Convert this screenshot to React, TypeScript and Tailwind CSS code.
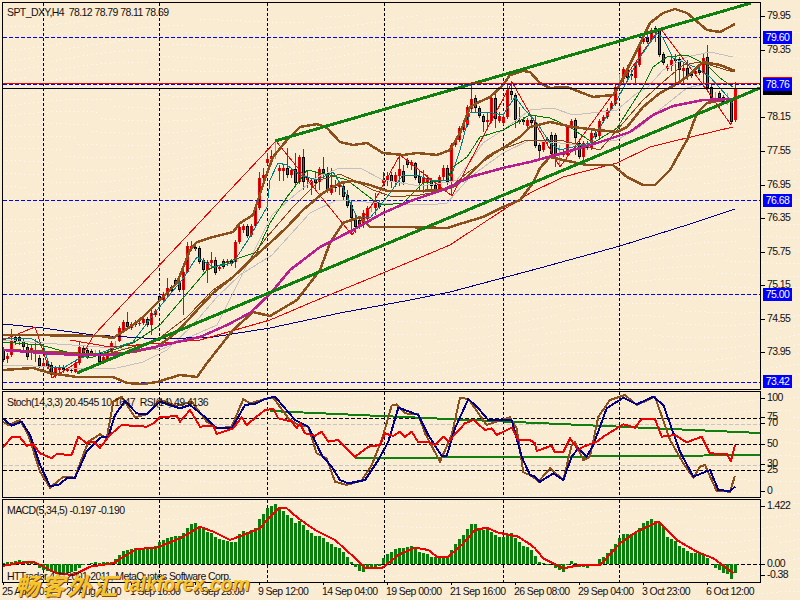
import React from "react";

type Candle = [string, number, number, number, number];

// zoomed reference coordinates -> page coordinates
const z = (ox: number, oy: number, pts: number[]) => pts.map((v, i) => (i % 2 ? oy + v / 3 : ox + v / 3));
const pl = (pts: number[]) => pts.map((v, i) => (i % 2 ? v + " " : v + ",")).join("");

const CANDLES: Candle[] = [
  ["g",350,360,347,362],["r",356,359,353,363],["r",340,355,329,357],["g",337,342,335,345],["g",337,342,335,345],["g",341,347,338,350],["g",347,357,344,360],["r",348,353,345,360],["g",350,354,339,362],["g",358,366,355,368],
  ["r",363,367,360,369],["g",363,366,361,369],["g",365,375,362,378],["r",368,376,366,378],["r",368,370,365,375],["g",368,370,365,373],["r",369,371,368,372],["g",370,371,368,373],["r",363,372,361,373],["r",347,363,342,365],
  ["g",348,353,345,356],["g",350,357,348,359],["g",351,353,349,355],["l",352,353,350,356],["g",353,362,350,364],["r",357,362,354,364],["r",352,359,350,361],["r",343,352,341,353],["l",343,344,341,346],["r",328,341,326,342],
  ["r",322,330,320,332],["g",322,327,312,329],["r",324,328,322,330],["g",322,325,320,327],["r",323,324,320,326],["r",319,323,317,325],["g",319,325,317,327],["r",313,325,310,335],["r",311,315,309,317],["g",296,300,294,302],
  ["r",294,300,292,302],["r",288,295,278,297],["g",287,291,285,293],["g",280,284,278,286],["g",282,290,280,292],["r",272,290,270,315],["r",246,272,242,273],["r",246,249,241,251],["g",247,249,245,251],["g",248,262,246,264],
  ["g",260,270,258,272],["r",262,270,260,283],["r",260,263,252,268],["g",260,273,257,275],["r",267,269,265,271],["g",261,267,259,269],["r",261,263,259,266],["g",261,264,259,266],["r",242,262,240,268],["r",227,242,223,244],
  ["r",226,230,224,233],["g",226,236,224,238],["r",226,235,224,237],["r",207,226,207,228],["r",178,208,172,210],["r",175,178,168,180],["r",159,163,153,165],["r",156,159,150,163],["l",157,158,142,159],["r",168,171,165,181],
  ["r",168,171,165,181],["g",168,175,148,178],["r",170,175,168,178],["g",169,183,153,185],["r",157,182,155,184],["g",157,182,149,190],["g",177,180,170,188],["r",180,185,178,195],["g",179,183,172,190],["r",169,182,167,190],
  ["g",169,173,157,178],["g",173,190,167,193],["r",185,193,168,195],["g",187,188,180,192],["r",185,187,183,195],["g",186,197,183,200],["g",195,206,190,208],["g",205,218,200,235],["g",218,227,215,233],["g",220,226,217,229],
  ["r",213,225,210,228],["r",208,219,206,224],["l",208,209,205,212],["r",203,208,193,215],["g",203,207,200,209],["r",180,183,172,186],["r",176,181,172,186],["g",175,182,172,188],["r",175,182,172,187],["r",169,176,155,186],
  ["g",171,182,165,185],["g",160,165,158,168],["r",162,165,160,170],["g",163,178,162,180],["g",176,183,170,190],["r",177,183,170,193],["r",178,183,175,190],["g",181,186,178,190],["g",185,190,182,192],["r",177,189,175,192],
  ["r",168,177,165,181],["g",168,182,165,185],["r",145,182,143,195],["r",140,145,138,147],["r",128,140,126,142],["r",124,130,122,132],["r",107,125,105,127],["r",99,109,84,112],["g",98,108,95,112],["g",108,116,106,118],
  ["g",116,122,114,132],["r",120,122,112,130],["r",98,121,96,123],["g",98,119,93,128],["r",116,121,112,123],["r",117,123,115,125],["r",90,117,84,119],["g",91,95,81,100],["g",95,120,93,128],["g",120,122,107,124],
  ["g",120,122,117,125],["r",120,126,118,128],["g",120,123,118,127],["g",122,146,115,148],["g",145,151,143,160],["r",142,150,140,152],["g",139,142,137,144],["g",135,154,132,156],["g",135,155,133,167],["l",145,146,145,167],
  ["r",152,155,150,157],["r",127,155,125,157],["r",121,126,119,128],["g",120,138,118,155],["g",143,157,141,159],["r",143,157,141,162],["g",143,148,141,150],["r",133,148,131,150],["g",133,137,131,139],["r",121,136,119,138],
  ["r",117,121,115,123],["r",110,117,108,119],["r",103,109,101,111],["r",87,104,85,106],["l",77,78,74,82],["r",69,78,67,85],["g",68,78,65,82],["g",74,76,70,80],["r",65,78,63,84],["r",45,65,43,67],
  ["r",38,42,36,44],["g",38,42,34,44],["r",30,40,28,42],["g",28,32,26,42],["g",30,55,28,57],["g",54,63,52,65],["r",66,69,64,71],["r",60,66,55,71],["g",59,61,54,84],["g",59,70,57,80],
  ["r",68,71,62,85],["g",68,76,60,80],["g",74,76,72,78],["r",71,74,69,76],["g",70,73,67,75],["r",58,73,53,87],["g",57,88,45,90],["g",87,98,85,100],["l",94,95,92,98],["g",93,98,91,100],
  ["g",97,102,95,104],["l",98,99,93,105],["g",100,122,98,124],["R",88,120,82,122],
];

const MACD_TOPS = [
  535,532,530,527,525,527,530,532,535,550,555,558,562,565,565,565,565,562,558,548,540,538,535,532,535,532,530,530,522,510,
  498,495,493,490,490,488,488,485,484,472,465,460,456,454,452,445,430,418,415,425,430,440,445,455,462,465,468,470,470,448,
  438,440,435,428,402,388,370,362,358,368,378,390,400,413,408,420,435,445,453,453,460,472,478,485,490,502,515,530,545,558,
  562,550,548,548,542,520,507,500,493,490,490,485,482,490,500,505,508,515,515,513,515,513,495,478,462,450,432,418,418,430,
  435,430,440,450,455,455,450,445,460,472,482,487,495,513,530,535,540,538,550,555,560,540,528,535,545,545,550,542,540,522,
  515,505,492,478,460,447,447,447,440,428,415,408,402,407,412,425,457,462,468,482,490,497,503,505,505,508,518,538,550,555,
  565,568,582,565,
];

const BB_UP = [3,335,33,335,100,336,113,338,133,325,143,317,160,300,177,283,190,250,197,242,213,237,233,232,240,223,253,215,267,173,273,157,287,140,300,127,317,124,327,128,340,142,353,145,367,143,383,153,403,155,417,153,437,155,450,150,460,133,470,107,477,103,490,97,503,85,510,75,523,71,530,72,540,83,550,88,567,87,593,97,613,95,618,88,637,50,650,23,663,13,675,9,687,13,707,30,720,32,735,24];
const BB_LOW = [3,370,33,368,50,373,77,377,113,377,127,383,143,384,157,382,180,375,197,377,207,363,233,330,253,312,270,316,297,300,307,287,320,270,330,243,343,223,360,217,370,227,403,227,447,228,463,223,483,217,503,207,520,200,533,183,540,168,550,157,563,160,587,165,613,165,627,177,643,185,655,185,670,170,687,140,697,113,707,103,723,100];
const BB_MID = [3,350,50,352,100,355,133,352,157,347,177,332,200,307,213,293,233,277,253,258,270,243,287,227,303,210,323,193,340,183,353,181,370,185,387,191,420,191,440,190,453,187,467,177,487,157,503,148,520,137,530,127,550,122,573,127,597,130,617,132,627,127,643,107,660,93,673,86,687,77,703,62,720,65,735,71];
const MAGENTA = [3,350,43,353,77,355,113,355,150,348,173,343,200,337,227,325,250,313,270,294,290,270,320,247,353,230,383,213,413,200,443,190,470,177,503,168,530,162,563,153,597,143,630,132,653,115,673,106,703,100,733,99];
const RED_MA = [70,340,110,347,200,340,270,320,317,300,383,273,450,245,503,210,530,193,563,177,617,163,650,147,670,142,733,127];
const NAVY_MA = [3,324,43,328,93,335,127,337,160,339,213,337,270,328,340,313,410,300,450,292,540,268,620,246,690,224,735,209];
const ZIGZAG = [3,340,35,327,52,378,78,362,94,335,276,141,352,235,375,200,400,155,452,196,477,148,512,82,560,167,618,87,660,28,707,90,731,125];
const GREY_UP = [3,340,43,343,100,347,160,350,217,325,272,215,297,193,317,177,340,168,360,168,383,180,420,186,450,182,457,180,483,143,503,130,530,110,553,108,573,115,617,110,637,93,647,88,663,70,687,57,710,52,733,57];
const GREY_LOW = [3,365,33,366,83,369,117,368,143,362,167,350,193,325,217,297,240,275,272,255,310,213,337,200,380,203,430,205,447,203,470,177,503,153,530,140,580,145,617,140,640,127,663,107,687,88,710,83,730,83];
const GREEN_MA = [3,342,40,345,90,358,133,343,160,325,190,290,207,270,233,260,257,252,270,223,287,197,300,180,307,170,330,175,347,180,360,190,373,200,383,205,403,203,423,183,447,180,453,167,467,157,480,137,503,130,530,115,550,118,570,127,593,143,617,128,643,87,653,67,667,57,687,55,707,65,720,78,733,87];
const TEAL_MA = [3,338,30,338,43,345,50,367,63,368,80,358,100,353,117,347,133,342,157,310,182,280,197,257,213,267,233,263,248,240,267,207,270,180,278,163,287,165,300,175,317,180,333,172,343,188,357,217,370,218,387,197,403,175,417,175,430,180,450,180,460,150,470,113,487,112,503,115,515,97,525,110,537,123,550,143,560,150,590,143,617,100,640,57,657,33,663,38,673,58,697,68,710,77,720,88,733,103];
const BROWN_MA = [100,356,157,340,187,317,213,290,240,272,267,237,293,207,320,180,340,174,357,182,373,190,393,197,420,195,447,190,467,173,500,150,527,140,560,140,600,150,617,130,643,100,663,82,683,65,700,62,733,72];

const ST_NAVY = [
  ...z(0,385,[8,100,35,122,65,110,90,150,120,240,150,303,175,300,200,280,225,278,260,200,300,158,325,155,345,90,375,48,410,85,440,88,480,50,540,70,570,60,620,100,650,130,695,130,735,60,770,55,795,42]),
  ...z(265,385,[0,42,30,35,60,70,90,105,130,125,170,210,200,245,225,285,250,295,300,285,340,225,370,170,400,68,460,90,490,150,530,213,545,213,570,130,610,42,640,70,670,105,740,105,770,215,795,270]),
  ...z(530,385,[15,275,30,290,70,265,100,285,125,215,145,190,170,215,190,180,230,70,280,38,320,58,370,35,400,60,450,200,490,275,540,255,565,315,600,318,615,305]),
];
const ST_BROWN = [
  ...z(0,385,[8,110,25,120,60,105,85,150,120,260,150,308,190,275,225,278,240,235,265,170,300,148,320,160,340,50,365,35,405,97,440,88,480,45,530,62,575,50,620,110,655,130,695,125,730,42,750,55,795,42]),
  ...z(265,385,[0,42,25,38,70,100,100,120,130,125,155,205,185,220,210,290,245,300,290,287,320,240,350,165,380,62,395,58,420,85,460,88,480,145,525,230,560,150,585,38,610,42,665,120,735,97,755,130,775,262,795,270]),
  ...z(530,385,[15,280,25,290,60,250,100,285,125,180,135,172,160,225,180,215,205,95,240,45,285,30,320,60,375,35,420,165,460,235,490,278,510,245,525,240,560,318,600,320,615,272]),
];
const ST_RED = [
  ...z(0,385,[8,188,35,157,60,157,80,182,100,178,120,205,155,220,170,207,215,210,235,155,260,175,280,170,300,188,330,150,365,120,440,125,460,115,480,97,530,93,540,110,570,75,600,125,640,122,650,147,700,130,725,97,740,120,770,95,795,75]),
  ...z(265,385,[0,75,25,72,40,100,80,110,95,130,105,115,120,145,150,152,170,140,190,170,220,165,270,215,310,185,345,180,360,145,385,153,405,140,420,155,440,140,460,172,490,170,510,180,535,155,550,170,600,115,625,105,660,135,680,130,695,150,740,128,760,165,795,165]),
  ...z(530,385,[15,175,20,198,65,182,75,202,100,200,120,160,145,195,160,185,200,170,220,155,280,118,315,128,335,102,375,102,395,155,435,150,470,172,515,155,540,205,590,207,603,228,615,180]),
];
const MACD_SIGNAL = [
  ...z(0,385,[8,543,50,535,100,530,130,545,170,565,220,570,270,545,340,535,370,515,410,492,470,488,540,460,600,425,640,440,690,465,730,450,780,430,795,412]),
  ...z(265,385,[0,412,40,370,65,370,100,400,150,435,210,465,260,510,300,550,350,550,400,510,450,488,490,495,515,515,550,515,590,480,630,435,665,428,700,443,760,455,795,478]),
  ...z(530,385,[15,490,40,520,100,550,150,540,210,540,270,475,320,440,385,410,440,465,500,500,550,520,610,565]),
];

const VLINES = [43, 159, 267, 384, 503, 619];

const PRICE_TICKS = [["79.95",16],["79.35",50],["78.15",117],["77.55",151],["76.95",185],["76.35",218],["75.75",252],["75.15",285],["74.55",319],["73.95",352]] as [string, number][];
const PRICE_TAGS = [["79.60",37],["76.68",200],["75.00",294],["73.42",381]] as [string, number][];
const STOCH_TICKS = [["100",398],["75",417],["70",423],["50",444],["30",464],["25",470],["0",491]] as [string, number][];
const MACD_TICKS = [["1.422",506],["0.00",564],["-0.38",575]] as [string, number][];
const TIME_TICKS = [["25 Aug 2011",3],["29 Aug 23:00",67],["1 Sep 16:00",131],["6 Sep 23:00",195],["9 Sep 12:00",259],["14 Sep 04:00",323],["19 Sep 00:00",387],["21 Sep 16:00",451],["26 Sep 08:00",515],["29 Sep 04:00",579],["3 Oct 23:00",643],["6 Oct 12:00",707]] as [string, number][];

const dots = () => {
  let d = "";
  for (let y0 = -12; y0 < 620; y0 += 12) {
    for (let x = 6; x < 800; x += 4.5) {
      const y = y0 + 5 * Math.sin((x + y0 * 1.4) / 45) - 0.06 * ((x + y0) % 110);
      if (y < 14 || y > 600) continue;
      d += `M${Math.round(x)} ${Math.round(y)}h1`;
    }
  }
  return d;
};

const Line = ({ pts, color, w = 1 }: { pts: number[]; color: string; w?: number }) => (
  <polyline points={pl(pts)} fill="none" stroke={color} strokeWidth={w} strokeLinejoin="round" />
);

const Hline = ({ y, color = "#0000ff", dash = "4 2" }: { y: number; color?: string; dash?: string }) => (
  <line x1={3} x2={760} y1={y} y2={y} stroke={color} strokeDasharray={dash} />
);

const Grid = ({ top, bottom }: { top: number; bottom: number }) => (
  <>
    {VLINES.map((x) => (
      <line key={x} x1={x} x2={x} y1={top} y2={bottom} stroke="#000" strokeDasharray="3 2" />
    ))}
  </>
);

const Candles = () => (
  <>
    {CANDLES.map(([t, top, bot, hi, lo], i) => {
      const x = 3 + 4 * i;
      if (t === "l")
        return <line key={i} x1={x + 0.5} x2={x + 0.5} y1={hi} y2={lo} stroke="#33e633" />;
      const red = t !== "g";
      return (
        <g key={i}>
          <line x1={x + 0.5} x2={x + 0.5} y1={hi} y2={lo} stroke={red ? "#f00000" : "#007a00"} />
          <rect x={x - 1} y={top} width={3} height={bot - top} fill={red ? "#f00000" : "#000"} />
          {t === "r" && <rect x={x} y={top} width={1} height={bot - top} fill="#400000" />}
          {t === "g" && <rect x={x} y={top + 1} width={1} height={Math.max(bot - top - 2, 1)} fill="#109010" />}
        </g>
      );
    })}
  </>
);

const AxisTick = ({ label, y, offset, tag }: { label: string; y: number; offset: number; tag?: boolean }) => (
  <div className="absolute left-0 flex items-center h-[12px]" style={{ top: y - offset - 6 }}>
    {tag ? null : <span className="w-[4px] h-px bg-black" />}
    {tag ? (
      <span className="ml-[2px] w-[29px] h-[13px] leading-[13px] bg-[#0000ff] text-white text-center">{label}</span>
    ) : (
      <span className="ml-[2px]">{label}</span>
    )}
  </div>
);

const App: React.FC = () => {
  return (
    <div className="relative w-[800px] h-[600px] overflow-hidden bg-[#faebd3] pl-[2px] pt-[2px] flex flex-col text-[10.5px] tracking-[-0.58px] text-[#111] font-['Liberation_Sans',sans-serif]">
      <svg className="absolute inset-0" width={800} height={600} shapeRendering="crispEdges">
        <path d={dots()} stroke="#fff" strokeOpacity={0.85} />
      </svg>

      {/* main chart */}
      <div className="relative flex h-[388px]">
        <div className="relative w-[759px] border border-black">
          <svg width={757} height={386} viewBox="3 3 757 386" className="block" shapeRendering="crispEdges">
            <Grid top={3} bottom={389} />
            <Hline y={37} />
            <Hline y={200} />
            <Hline y={294} />
            <Hline y={382} />
            <Candles />
            <Line pts={GREY_UP} color="#c4c0c0" />
            <Line pts={GREY_LOW} color="#c4c0c0" />
            <Line pts={NAVY_MA} color="#00008b" />
            <Line pts={RED_MA} color="#f00000" />
            <Line pts={ZIGZAG} color="#f00000" />
            <Line pts={GREEN_MA} color="#007a00" />
            <Line pts={BROWN_MA} color="#8b4513" />
            <Line pts={TEAL_MA} color="#008080" />
            <Line pts={BB_UP} color="#8b4f1c" w={2.5} />
            <Line pts={BB_LOW} color="#8b4f1c" w={2.5} />
            <Line pts={BB_MID} color="#8b4f1c" w={2.5} />
            <Line pts={MAGENTA} color="#b81e90" w={2.5} />
            <Line pts={[275, 141, 751, 3]} color="#0f800f" w={3} />
            <Line pts={[77, 373, 760, 88]} color="#0f800f" w={3} />
            <Hline y={84} />
            <line x1={3} x2={760} y1={83} y2={83} stroke="#f00000" />
            <line x1={3} x2={760} y1={88} y2={88} stroke="#000" />
          </svg>
          <span className="absolute left-[4px] top-[2px] whitespace-pre">SPT_DXY,H4  78.12 78.79 78.11 78.69</span>
        </div>
        <div className="relative flex-1">
          {PRICE_TICKS.map(([t, y]) => (
            <AxisTick key={t} label={t} y={y} offset={2} />
          ))}
          {PRICE_TAGS.map(([t, y]) => (
            <AxisTick key={t} label={t} y={y} offset={2} tag />
          ))}
          <span className="absolute left-[2px] top-[81px] w-[29px] h-[12px] bg-black" />
          <span className="absolute left-[2px] top-[75px] w-[29px] h-[2px] bg-[#f00000]" />
          <AxisTick label="78.76" y={84} offset={2} tag />
        </div>
      </div>

      {/* stochastic + rsi */}
      <div className="relative flex h-[107px] mt-px">
        <div className="relative w-[759px] border border-black">
          <svg width={757} height={105} viewBox="3 392 757 105" className="block" shapeRendering="crispEdges">
            <Grid top={392} bottom={497} />
            <Hline y={418} color="#000" />
            <Hline y={444} color="#000" />
            <Hline y={470} color="#000" />
            <Hline y={424} color="#c8c4c4" />
            <Hline y={465} color="#c8c4c4" />
            <Line pts={[270, 411, 760, 433]} color="#0f800f" w={2} />
            <Line pts={[355, 458, 535, 457, 760, 455]} color="#0f800f" w={2} />
            <Line pts={ST_BROWN} color="#8b4f1c" w={2} />
            <Line pts={ST_NAVY} color="#00008b" w={2} />
            <Line pts={ST_RED} color="#f00000" w={2} />
          </svg>
          <span className="absolute left-[4px] top-[3px] whitespace-pre">Stoch(14,3,3) 20.4545 10.1647  RSI(14) 49.4136</span>
        </div>
        <div className="relative flex-1">
          {STOCH_TICKS.map(([t, y]) => (
            <AxisTick key={t} label={t} y={y} offset={391} />
          ))}
        </div>
      </div>

      {/* macd */}
      <div className="relative flex h-[84px] mt-px">
        <div className="relative w-[759px] border border-black">
          <svg width={757} height={82} viewBox="3 500 757 82" className="block" shapeRendering="crispEdges">
            <Grid top={500} bottom={582} />
            <Hline y={564} color="#000" />
            {MACD_TOPS.map((t, i) => {
              const top = 385 + t / 3;
              return (
                <rect key={i} x={3 + 4 * i - 1} y={Math.min(top, 564)} width={3} height={Math.abs(top - 564)} fill="#0a7d0a" />
              );
            })}
            <Line pts={MACD_SIGNAL} color="#f00000" w={2} />
          </svg>
          <span className="absolute left-[4px] top-[3px] whitespace-pre">MACD(5,34,5) -0.197 -0.190</span>
          <span className="absolute left-[4px] top-[69px] whitespace-pre">HTTrader 4 © 2001-2011, MetaQuotes Software Corp.</span>
        </div>
        <div className="relative flex-1">
          {MACD_TICKS.map(([t, y]) => (
            <AxisTick key={t} label={t} y={y} offset={499} />
          ))}
        </div>
      </div>

      {/* time axis */}
      <div className="relative flex-1">
        {TIME_TICKS.map(([t, x]) => (
          <div key={t} className="absolute top-0 flex flex-col" style={{ left: x - 2 }}>
            <span className="w-px h-[2px] bg-black" />
            <span className="whitespace-nowrap -ml-[1px] leading-[13px]">{t}</span>
          </div>
        ))}
      </div>

      {/* watermark */}
      <div className="absolute left-[15px] top-[570px] flex items-center italic font-bold text-[#f5c52e] [text-shadow:1px_1px_0_#8a4a10]">
        <span className="w-[108px] text-[24px] leading-[29px] tracking-[2px] font-['Noto_Sans_CJK_SC',sans-serif]">畅客外汇</span>
        <span className="text-[19.5px] leading-[29px] tracking-[0px] font-['Liberation_Sans',sans-serif]">talkforex.com</span>
      </div>
    </div>
  );
};

export default App;
